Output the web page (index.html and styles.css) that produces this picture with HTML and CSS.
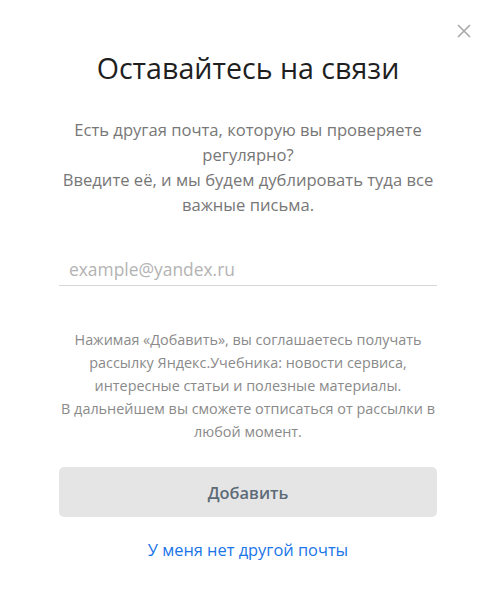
FILE: index.html
```html
<!DOCTYPE html>
<html lang="ru">
<head>
<meta charset="utf-8">
<link rel="stylesheet" href="styles.css">
</head>
<body>
<div class="modal">
  <button class="close" aria-label="Закрыть">
    <svg width="14" height="14" viewBox="0 0 14 14"><path d="M1 1L13 13M13 1L1 13" stroke="#a8a8a8" stroke-width="1.6" fill="none"/></svg>
  </button>
  <h1 class="title">Оставайтесь на связи</h1>
  <p class="lead">Есть другая почта, которую вы проверяете регулярно?<br>Введите её, и мы будем дублировать туда все важные письма.</p>
  <div class="field"><input class="input" type="text" placeholder="example@yandex.ru"></div>
  <p class="note">Нажимая «Добавить», вы соглашаетесь получать рассылку Яндекс.Учебника: новости сервиса, интересные статьи и полезные материалы.<br>В дальнейшем вы сможете отписаться от рассылки в любой момент.</p>
  <button class="submit">Добавить</button>
  <a class="link" href="#">У меня нет другой почты</a>
</div>
</body>
</html>
```
FILE: styles.css
```css
* { box-sizing: border-box; }
html, body { margin: 0; padding: 0; background: #fff; }
body { font-family: "Open Sans", "Noto Sans", sans-serif; }
.modal {
  position: relative;
  width: 496px;
  min-height: 611px;
  padding: 48px 59px 0;
  display: flex;
  flex-direction: column;
  align-items: stretch;
}
.close {
  position: absolute;
  top: 24px;
  right: 25px;
  border: 0;
  background: none;
  padding: 0;
  width: 14px;
  height: 14px;
  cursor: pointer;
}
.close svg { display: block; }
.title {
  margin: 0;
  font-size: 28.6px;
  font-weight: 400;
  line-height: 40px;
  color: #1f1f1f;
  text-align: center;
}
.lead {
  margin: 29px -10px 0;
  font-size: 16.6px;
  line-height: 25px;
  color: #777;
  text-align: center;
}
.field {
  margin-top: 36px;
  border-bottom: 1px solid #d6d6d6;
}
.input {
  width: 100%;
  border: 0;
  outline: none;
  padding: 0 10px;
  height: 32px;
  font-family: inherit;
  font-size: 17.4px;
  color: #333;
  background: transparent;
}
.input::placeholder { color: #b3b3b3; }
.note {
  margin: 42px -10px 0;
  font-size: 14.4px;
  line-height: 23px;
  color: #8a8a8a;
  text-align: center;
}
.submit {
  margin-top: 24px;
  height: 50px;
  border: 0;
  border-radius: 5px;
  background: #e5e5e5;
  color: #5d6b78;
  font-family: inherit;
  font-size: 16.4px;
  font-weight: 600;
}
.link {
  margin-top: 21px;
  align-self: center;
  font-size: 16.4px;
  color: #1a75e8;
  text-decoration: none;
}
```
